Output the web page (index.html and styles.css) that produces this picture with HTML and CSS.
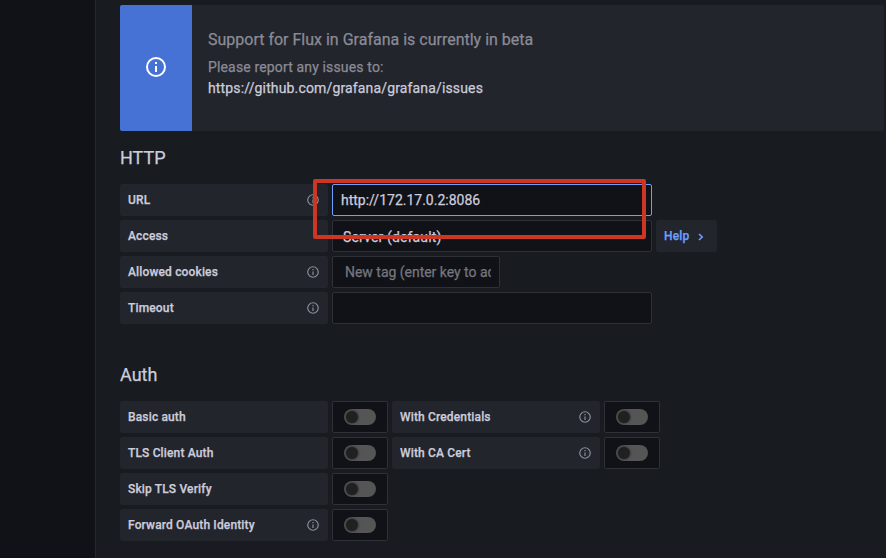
FILE: index.html
```html
<!DOCTYPE html>
<html lang="en">
<head>
<meta charset="utf-8">
<title>Data source settings</title>
<link rel="stylesheet" href="styles.css">
</head>
<body>
<svg class="defs" width="0" height="0">
  <symbol id="info" viewBox="0 0 24 24"><path fill="currentColor" d="M12,2A10,10,0,1,0,22,12,10,10,0,0,0,12,2Zm0,18a8,8,0,1,1,8-8A8,8,0,0,1,12,20Zm-1-9h2v6h-2Zm0-4h2v2h-2Z"/></symbol>
</svg>
<div class="app">
  <aside class="side"></aside>
  <main class="page">
    <section class="alert">
      <div class="alert-icon"><svg width="24" height="24"><use href="#info"/></svg></div>
      <div class="alert-body">
        <div class="alert-title">Support for Flux in Grafana is currently in beta</div>
        <div class="alert-text">Please report any issues to:</div>
        <a class="alert-link">https://github.com/grafana/grafana/issues</a>
      </div>
    </section>

    <h3 class="heading">HTTP</h3>
    <div class="rows http">
      <div class="row"><div class="label">URL<svg class="info"><use href="#info"/></svg></div><div class="input focused">http://172.17.0.2:8086</div></div>
      <div class="row"><div class="label">Access</div><div class="input select"><span>Server (default)</span><svg class="chevron" viewBox="0 0 10 6"><path d="M2.5 1.5l2.5 2.5 2.5-2.5"/></svg></div><div class="help">Help<svg viewBox="0 0 6 8"><path d="M1 1l3.2 3L1 7"/></svg></div></div>
      <div class="row"><div class="label">Allowed cookies<svg class="info"><use href="#info"/></svg></div><div class="input tag"><span>New tag (enter key to add)</span></div></div>
      <div class="row"><div class="label">Timeout<svg class="info"><use href="#info"/></svg></div><div class="input"></div></div>
      <div class="highlight"></div>
    </div>

    <h3 class="heading auth-heading">Auth</h3>
    <div class="rows">
      <div class="row"><div class="label">Basic auth</div><div class="switch"><i></i></div><div class="label">With Credentials<svg class="info"><use href="#info"/></svg></div><div class="switch"><i></i></div></div>
      <div class="row"><div class="label">TLS Client Auth</div><div class="switch"><i></i></div><div class="label">With CA Cert<svg class="info"><use href="#info"/></svg></div><div class="switch"><i></i></div></div>
      <div class="row"><div class="label">Skip TLS Verify</div><div class="switch"><i></i></div></div>
      <div class="row"><div class="label">Forward OAuth Identity<svg class="info"><use href="#info"/></svg></div><div class="switch"><i></i></div></div>
    </div>
  </main>
</div>
</body>
</html>
```
FILE: styles.css
```css
* { box-sizing: border-box; }
body {
  margin: 0;
  background: #181b1f;
  color: #ccccdc;
  font: 14px/22px Roboto, sans-serif;
  letter-spacing: 0.15px;
  -webkit-text-stroke: 0.25px currentColor;
  overflow: hidden;
}
.defs { position: absolute; }
svg { flex: none; }
.app { display: flex; height: 558px; }
.side { flex: none; width: 96px; background: #111217; border-right: 1px solid #26282d; }
.page { flex: 1; padding: 5px 2px 0 24px; }

.alert { display: flex; height: 126px; background: #22252b; border-radius: 2px; overflow: hidden; }
.alert-icon { display: flex; align-items: center; justify-content: center; width: 72px; padding-bottom: 2px; background: #4671d5; color: #fff; }
.alert-body { padding: 24px 16px; color: #8b8b97; }
.alert-title { font-size: 16px; line-height: 22px; margin-bottom: 6px; letter-spacing: 0; }
.alert-text { line-height: 21px; }
.alert-link { display: block; line-height: 21px; color: #ccccdc; }

.heading { margin: 16px 0 15px; font-size: 18px; line-height: 22px; font-weight: 400; letter-spacing: 0; }
.auth-heading { margin: 40px 0 15px; }
.rows { display: flex; flex-direction: column; gap: 4px; position: relative; }
.row { display: flex; gap: 4px; height: 32px; }
.label {
  display: flex; align-items: center; justify-content: space-between;
  width: 208px; padding: 0 8px; background: #22252b; border-radius: 2px;
  font-size: 12px; font-weight: 500;
}
.info { width: 14px; height: 14px; color: #8f909c; }
.input {
  display: flex; align-items: center; width: 320px; padding: 0 8px;
  background: #111217; border: 1px solid #303136; border-radius: 2px;
}
.focused { border-color: #6e9fff; letter-spacing: 0; }
.select { justify-content: space-between; padding: 2px 10px 0; }
.chevron { width: 10px; height: 6px; margin-bottom: 1px; fill: none; stroke: #8f909c; stroke-width: 1.3; }
.tag { width: 168px; padding: 0 8px 0 12px; color: #75767f; letter-spacing: -0.02px; }
.tag span { overflow: hidden; white-space: nowrap; }
.help {
  display: flex; align-items: center; width: 61px; padding: 0 8px;
  background: #22252b; border-radius: 2px; color: #6e9fff; font-size: 12px; font-weight: 500;
}
.help svg { width: 6px; height: 8px; margin: 2px 0 0 9px; fill: none; stroke: currentColor; stroke-width: 1.6; }
.highlight {
  position: absolute; left: 193px; top: -5px; width: 333px; height: 60px;
  border: 4px solid #cb3625; border-radius: 2px;
}
.switch {
  display: flex; align-items: center; justify-content: center; width: 56px;
  background: #111217; border: 1px solid #303136; border-radius: 2px;
}
.switch i { display: flex; align-items: center; width: 32px; height: 16px; border-radius: 8px; background: #555; }
.switch i::before { content: ""; width: 12px; height: 12px; margin-left: 2px; border-radius: 50%; background: #202020; box-shadow: 0 0 3px #202020; }
```
